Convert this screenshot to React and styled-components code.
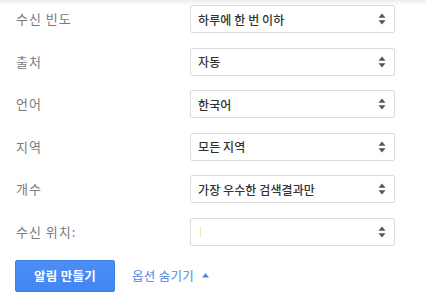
import React from "react";
import styled, { createGlobalStyle } from "styled-components";

const GlobalStyle = createGlobalStyle`
  html, body {
    margin: 0;
    padding: 0;
    background: #fff;
    font-family: "Noto Sans CJK KR", "Noto Sans", sans-serif;
  }
`;

const Page = styled.div`
  width: 426px;
  height: 303px;
  background: linear-gradient(#ececec 0px, #fff 5px);
  padding: 5px 0 0 16px;
  box-sizing: border-box;
`;

const Form = styled.div`
  display: grid;
  grid-template-columns: 174px 205px;
  row-gap: 14.6px;
  align-items: center;
`;

const Label = styled.div`
  font-size: 13px;
  color: #7a7a7a;
  letter-spacing: 1px;
  line-height: 28px;
`;

const Select = styled.div`
  height: 28px;
  box-sizing: border-box;
  border: 1px solid #dcdcdc;
  border-radius: 2px;
  display: flex;
  align-items: center;
  justify-content: space-between;
  padding: 0 8px 0 7px;
  font-size: 12px;
  font-weight: 500;
  color: #333;
  letter-spacing: 0.1px;
`;

const Caret = styled.span`
  width: 1px;
  height: 10px;
  background: #f0e2a0;
  margin-left: 2px;
`;

const Actions = styled.div`
  display: flex;
  align-items: center;
  margin-top: 14px;
  margin-left: -1px;
  gap: 17px;
`;

const Button = styled.button`
  width: 100px;
  height: 32px;
  border: 1px solid #3c7ee8;
  border-radius: 2px;
  background: linear-gradient(#4d8ef5, #4385f3);
  color: #fff;
  font-family: inherit;
  font-size: 12.5px;
  font-weight: 700;
  letter-spacing: 0.3px;
  padding: 0;
`;

const Toggle = styled.span`
  display: flex;
  align-items: center;
  gap: 8px;
  color: #4d86e0;
  font-size: 12.5px;
  letter-spacing: 0.3px;
`;

const Arrows = () => (
  <svg width="8" height="12" viewBox="0 0 8 12">
    <path d="M4 0.5 L7.5 4.8 H0.5 Z" fill="#555" />
    <path d="M4 11.5 L7.5 7.2 H0.5 Z" fill="#555" />
  </svg>
);

const rows = [
  ["수신 빈도", "하루에 한 번 이하"],
  ["출처", "자동"],
  ["언어", "한국어"],
  ["지역", "모든 지역"],
  ["개수", "가장 우수한 검색결과만"],
  ["수신 위치:", null],
];

export default function App() {
  return (
    <Page>
      <GlobalStyle />
      <Form>
        {rows.map(([label, value]) => (
          <React.Fragment key={label}>
            <Label>{label}</Label>
            <Select>
              {value === null ? <Caret /> : <span>{value}</span>}
              <Arrows />
            </Select>
          </React.Fragment>
        ))}
      </Form>
      <Actions>
        <Button>알림 만들기</Button>
        <Toggle>
          옵션 숨기기
          <svg width="7" height="5" viewBox="0 0 7 5">
            <path d="M3.5 0 L7 4.5 H0 Z" fill="#4d86e0" />
          </svg>
        </Toggle>
      </Actions>
    </Page>
  );
}
